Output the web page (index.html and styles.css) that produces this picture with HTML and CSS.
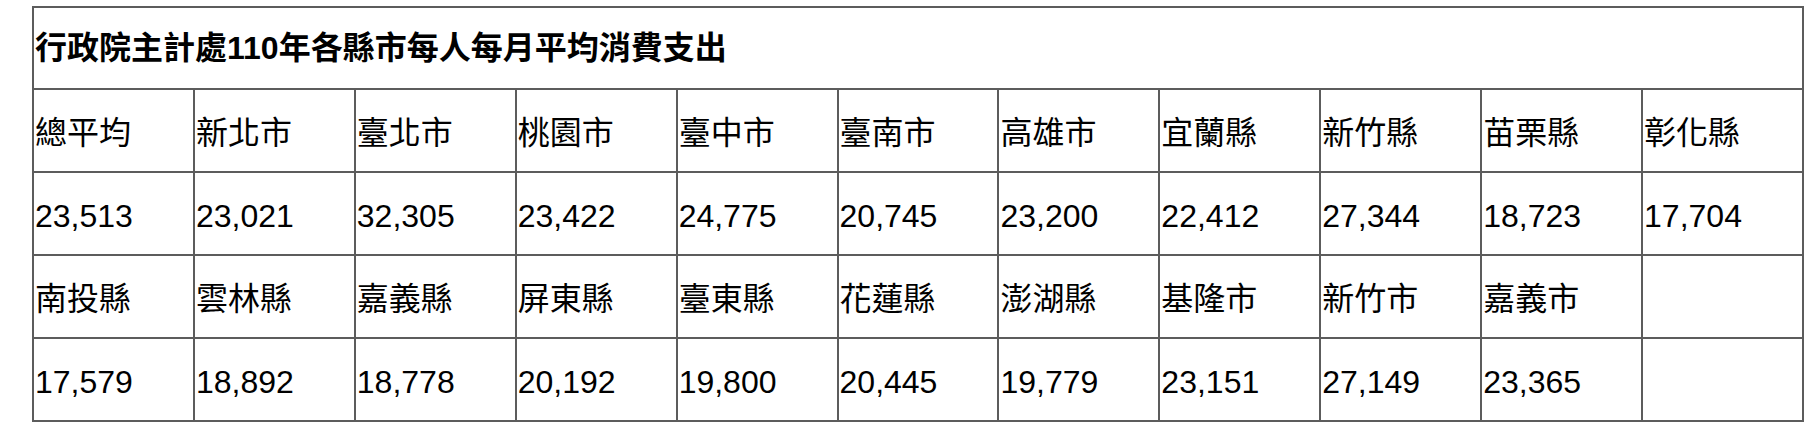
FILE: index.html
```html
<!DOCTYPE html>
<html lang="zh-Hant">
<head>
<meta charset="utf-8">
<title>行政院主計處110年各縣市每人每月平均消費支出</title>
<link rel="stylesheet" href="styles.css">
</head>
<body>
<table class="data">
  <colgroup>
    <col class="c"><col class="c"><col class="c"><col class="c"><col class="c"><col class="c"><col class="c"><col class="c"><col class="c"><col class="c"><col class="c">
  </colgroup>
  <tr><th class="title" colspan="11">行政院主計處110年各縣市每人每月平均消費支出</th></tr>
  <tr><td>總平均</td><td>新北市</td><td>臺北市</td><td>桃園市</td><td>臺中市</td><td>臺南市</td><td>高雄市</td><td>宜蘭縣</td><td>新竹縣</td><td>苗栗縣</td><td>彰化縣</td></tr>
  <tr><td>23,513</td><td>23,021</td><td>32,305</td><td>23,422</td><td>24,775</td><td>20,745</td><td>23,200</td><td>22,412</td><td>27,344</td><td>18,723</td><td>17,704</td></tr>
  <tr><td>南投縣</td><td>雲林縣</td><td>嘉義縣</td><td>屏東縣</td><td>臺東縣</td><td>花蓮縣</td><td>澎湖縣</td><td>基隆市</td><td>新竹市</td><td>嘉義市</td><td></td></tr>
  <tr><td>17,579</td><td>18,892</td><td>18,778</td><td>20,192</td><td>19,800</td><td>20,445</td><td>19,779</td><td>23,151</td><td>27,149</td><td>23,365</td><td></td></tr>
</table>
</body>
</html>
```
FILE: styles.css
```css
html, body {
  margin: 0;
  padding: 0;
  background: #ffffff;
}
body {
  font-family: "Liberation Sans", "Noto Sans CJK TC", sans-serif;
  color: #000000;
}
.data {
  margin: 6px 0 0 32px;
  width: 1772px;
  table-layout: fixed;
  border-collapse: collapse;
  font-size: 32px;
}
.data th,
.data td {
  border: 2px solid #5c5c5c;
  height: 75px;
  padding: 6px 1px 0;
  text-align: left;
  vertical-align: middle;
  font-weight: normal;
  line-height: 1.2;
  white-space: nowrap;
}
.data .title {
  height: 80px;
  padding-top: 0;
  font-weight: bold;
}
```
